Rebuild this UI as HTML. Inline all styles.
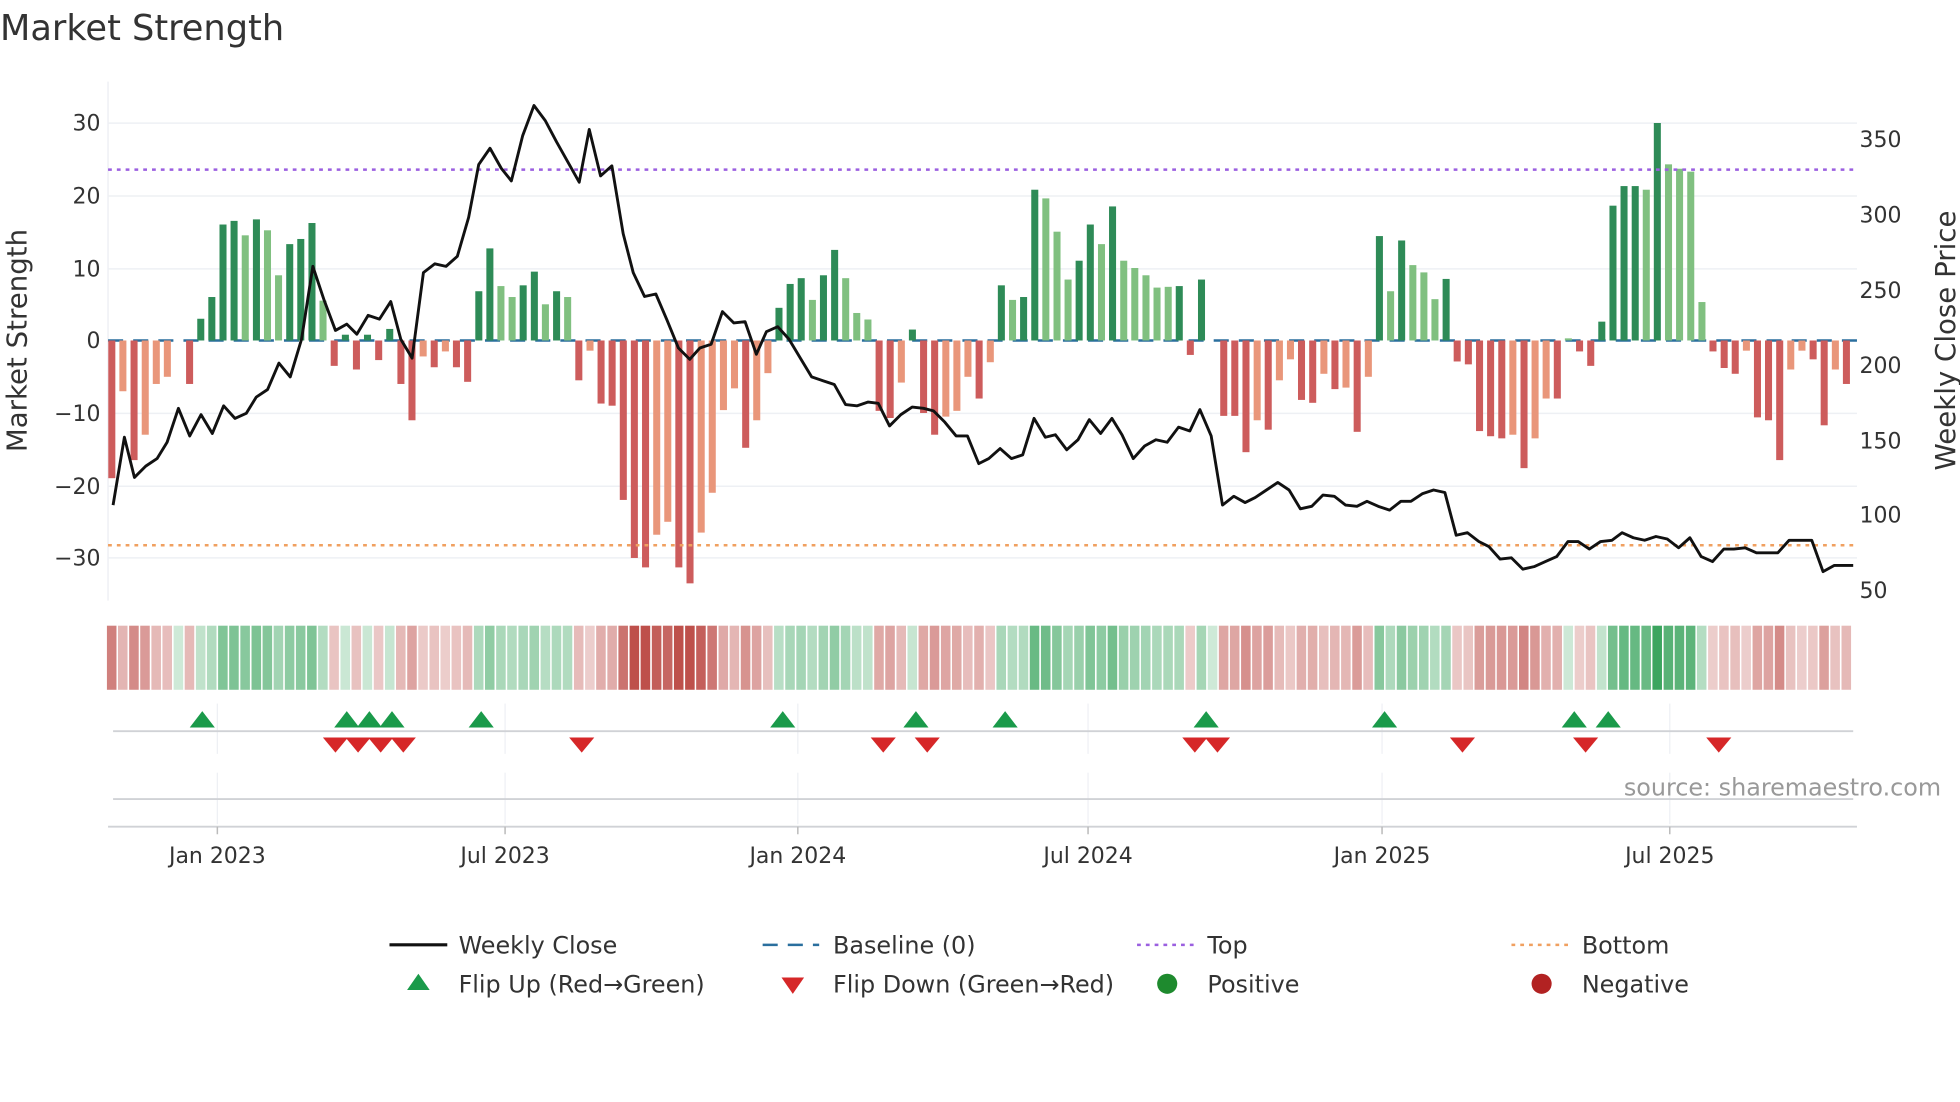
<!DOCTYPE html>
<html><head><meta charset="utf-8"><style>
html,body{margin:0;padding:0;background:#fff;width:1960px;height:1102px;overflow:hidden}
svg{display:block}
text{font-family:"DejaVu Sans","Liberation Sans",sans-serif;fill:#333}
</style></head><body>
<svg id="s" width="1960" height="1102" viewBox="0 0 1560 877.1" xmlns="http://www.w3.org/2000/svg">
<text x="0" y="32" font-size="28" fill="#333">Market Strength</text>
<g id="grid" stroke="#eef0f4" stroke-width="1.2">
<line x1="86" x2="1478" y1="98" y2="98"/><line x1="86" x2="1478" y1="156" y2="156"/><line x1="86" x2="1478" y1="214" y2="214"/><line x1="86" x2="1478" y1="329" y2="329"/><line x1="86" x2="1478" y1="387" y2="387"/><line x1="86" x2="1478" y1="444" y2="444"/>
</g>
<line x1="86" x2="86" y1="65" y2="478" stroke="#eef0f4" stroke-width="1.2"/>
<g font-size="17.5" text-anchor="end">
<text x="80" y="104">30</text><text x="80" y="162">20</text><text x="80" y="220">10</text><text x="80" y="277">0</text><text x="80" y="335">−10</text><text x="80" y="393">−20</text><text x="80" y="450">−30</text>
</g>
<g font-size="17.5">
<text x="1480" y="117">350</text><text x="1480" y="177">300</text><text x="1480" y="237">250</text><text x="1480" y="297">200</text><text x="1480" y="357">150</text><text x="1480" y="416">100</text><text x="1480" y="476">50</text>
</g>
<text transform="translate(21,271) rotate(-90)" font-size="22" text-anchor="middle">Market Strength</text>
<text transform="translate(1556,271) rotate(-90)" font-size="22" text-anchor="middle">Weekly Close Price</text>
<line x1="86" x2="1478" y1="271" y2="271" stroke="#2a6f9e" stroke-width="2" stroke-dasharray="12,8"/>
<g id="bars"></g>
<line x1="86" x2="1478" y1="135" y2="135" stroke="#9b5fe0" stroke-width="2" stroke-dasharray="3,4"/>
<line x1="86" x2="1478" y1="434" y2="434" stroke="#f0a060" stroke-width="2" stroke-dasharray="3,4"/>
<polyline id="price" fill="none" stroke="#111" stroke-width="2.3" stroke-linejoin="round"/>
<g id="heat"></g>
<g stroke="#eef0f4" stroke-width="1">
<line x1="173" x2="173" y1="560" y2="600"/><line x1="402" x2="402" y1="560" y2="600"/><line x1="635" x2="635" y1="560" y2="600"/><line x1="866" x2="866" y1="560" y2="600"/><line x1="1100" x2="1100" y1="560" y2="600"/><line x1="1329" x2="1329" y1="560" y2="600"/>
<line x1="173" x2="173" y1="615" y2="656"/><line x1="402" x2="402" y1="615" y2="656"/><line x1="635" x2="635" y1="615" y2="656"/><line x1="866" x2="866" y1="615" y2="656"/><line x1="1100" x2="1100" y1="615" y2="656"/><line x1="1329" x2="1329" y1="615" y2="656"/>
</g>
<line x1="90" x2="1475" y1="582" y2="582" stroke="#d0d2d6" stroke-width="1.5"/>
<line x1="90" x2="1475" y1="636" y2="636" stroke="#d0d2d6" stroke-width="1.5"/>
<line x1="86" x2="1478" y1="658" y2="658" stroke="#d0d2d6" stroke-width="1.5"/>
<g stroke="#bbb" stroke-width="1.2">
<line x1="173" x2="173" y1="658" y2="664"/><line x1="402" x2="402" y1="658" y2="664"/><line x1="635" x2="635" y1="658" y2="664"/><line x1="866" x2="866" y1="658" y2="664"/><line x1="1100" x2="1100" y1="658" y2="664"/><line x1="1329" x2="1329" y1="658" y2="664"/>
</g>
<g id="marks"></g>
<text x="1545" y="633" font-size="19" text-anchor="end" style="fill:#999">source: sharemaestro.com</text>
<g font-size="17.5" text-anchor="middle">
<text x="173" y="687">Jan 2023</text><text x="402" y="687">Jul 2023</text><text x="635" y="687">Jan 2024</text><text x="866" y="687">Jul 2024</text><text x="1100" y="687">Jan 2025</text><text x="1329" y="687">Jul 2025</text>
</g>
<g font-size="19">
<line x1="310" x2="356" y1="752" y2="752" stroke="#111" stroke-width="2.5"/><text x="365" y="759">Weekly Close</text>
<line x1="607" x2="652" y1="752" y2="752" stroke="#2a6f9e" stroke-width="2" stroke-dasharray="12,8"/><text x="663" y="759">Baseline (0)</text>
<line x1="905" x2="950" y1="752" y2="752" stroke="#9b5fe0" stroke-width="2" stroke-dasharray="3,4"/><text x="961" y="759">Top</text>
<line x1="1203" x2="1248" y1="752" y2="752" stroke="#f0a060" stroke-width="2" stroke-dasharray="3,4"/><text x="1259" y="759">Bottom</text>
<polygon points="324,788 342,788 333,775" fill="#1a9a4a"/><text x="365" y="790">Flip Up (Red→Green)</text>
<polygon points="622,778 640,778 631,791" fill="#d62728"/><text x="663" y="790">Flip Down (Green→Red)</text>
<circle cx="929" cy="783" r="8" fill="#1e8a2e"/><text x="961" y="790">Positive</text>
<circle cx="1227" cy="783" r="8" fill="#b22222"/><text x="1259" y="790">Negative</text>
</g>
</svg>
<script>
var D="-19r -7s -16.5r -13s -6s -5s 0r -6r 3d 6d 16d 16.5d 14.5l 16.7d 15.2l 9l 13.3d 14d 16.2d 5.5l -3.5r 0.8d -4r 0.8d -2.7r 1.6d -6r -11r -2.2s -3.7r -1.5s -3.7r -5.7r 6.8d 12.7d 7.5l 6l 7.6d 9.5d 5l 6.8d 6l -5.5r -1.4s -8.7r -9r -22r -30r -31.3r -26.8s -25s -31.3r -33.5r -26.5s -21s -9.6s -6.6s -14.8r -11s -4.5s 4.5d 7.8d 8.6d 5.6l 9d 12.5d 8.6l 3.8l 2.9l -9.7r -10.7r -5.8s 1.5d -10r -13r -10.5s -9.7s -5s -8r -3s 7.6d 5.6l 6d 20.8d 19.6l 15l 8.4l 11d 16d 13.3l 18.5d 11l 10l 9l 7.3l 7.4l 7.5d -2r 8.4d 0r -10.4r -10.4r -15.4r -11s -12.3r -5.5s -2.6s -8.2r -8.6r -4.6s -6.7r -6.5s -12.6r -5s 14.4d 6.8l 13.8d 10.4l 9.4l 5.7l 8.5d -2.9r -3.3r -12.5r -13.2r -13.5r -13s -17.6r -13.5s -8s -8r 0.3l -1.5r -3.5r 2.6d 18.6d 21.3d 21.3d 20.8l 30d 24.3l 23.7l 23.3l 5.3l -1.5r -3.8r -4.6r -1.4s -10.6r -11r -16.5r -4s -1.4s -2.6r -11.7r -4s -6r".split(" ");
var C={d:"#2e8b57",l:"#80c080",r:"#cd5c5c",s:"#e9967a"};
var b="",h="";
D.forEach(function(t,i){var v=parseFloat(t),c=t.slice(-1),x=89+8.85*i;
 var y0=271,y1=271-5.77*v;
 if(Math.abs(v)>0.05)b+='<rect x="'+(x-2.8).toFixed(1)+'" y="'+Math.min(y0,y1).toFixed(1)+'" width="5.6" height="'+Math.abs(y1-y0).toFixed(1)+'" fill="'+C[c]+'"/>';
 var a=Math.min(1,0.25+Math.abs(v)/40),col;
 if(v>=0){col="rgb("+Math.round(255-(255-60)*a)+","+Math.round(255-(255-165)*a)+","+Math.round(255-(255-95)*a)+")";}
 else{col="rgb("+Math.round(255-(255-190)*a)+","+Math.round(255-(255-80)*a)+","+Math.round(255-(255-75)*a)+")";}
 h+='<rect x="'+(x-3.9).toFixed(1)+'" y="498" width="7.6" height="51" fill="'+col+'"/>';
});
document.getElementById("bars").innerHTML=b;document.getElementById("heat").innerHTML=h;
var P="90,402 99,348 107,380 116,371 125,365 133,352 142,325 151,347 160,330 169,345 178,323 187,333 196,329 204,316 213,310 222,289 231,300 240,270 249,212 258,239 267,263 276,258 284,266 293,251 302,254 311,240 319,270 328,285 337,217 346,210 355,212 364,204 373,173 381,131 390,118 399,134 407,144 416,108 425,84 434,96 443,113 452,129 461,145 469,103 478,140 487,132 496,186 504,217 513,236 522,234 531,255 540,277 549,286 557,277 566,274 575,248 584,257 593,256 602,282 610,264 619,260 628,270 637,285 646,300 655,303 664,306 673,322 682,323 691,320 699,321 708,339 717,330 726,324 735,325 743,327 752,336 761,347 770,347 779,369 787,365 796,357 805,365 814,362 823,333 832,348 840,346 849,358 858,350 867,334 876,345 885,333 893,346 902,365 911,355 920,350 929,352 938,340 947,343 955,326 964,347 973,402 982,395 991,400 999,396 1008,390 1017,384 1026,390 1035,405 1044,403 1053,394 1062,395 1071,402 1080,403 1088,399 1097,403 1106,406 1115,399 1123,399 1132,393 1141,390 1150,392 1159,426 1168,424 1177,431 1185,435 1194,445 1203,444 1212,453 1221,451 1230,447 1239,443 1248,431 1256,431 1265,437 1274,431 1283,430 1291,424 1300,428 1309,430 1318,427 1327,429 1336,436 1345,428 1354,443 1363,447 1372,437 1380,437 1389,436 1398,440 1407,440 1415,440 1424,430 1433,430 1442,430 1451,455 1460,450 1469,450 1475,450";
document.getElementById("price").setAttribute("points",P);
var up=[161,276,294,312,383,623,729,800,960,1102,1253,1280],dn=[267,285,303,321,463,703,738,951,969,1164,1262,1368],m="";
up.forEach(function(x){m+='<polygon points="'+(x-10)+',579 '+(x+10)+',579 '+x+',566" fill="#1a9a4a"/>';});
dn.forEach(function(x){m+='<polygon points="'+(x-10)+',587 '+(x+10)+',587 '+x+',599" fill="#d62728"/>';});
document.getElementById("marks").innerHTML=m;
</script>
</body></html>
